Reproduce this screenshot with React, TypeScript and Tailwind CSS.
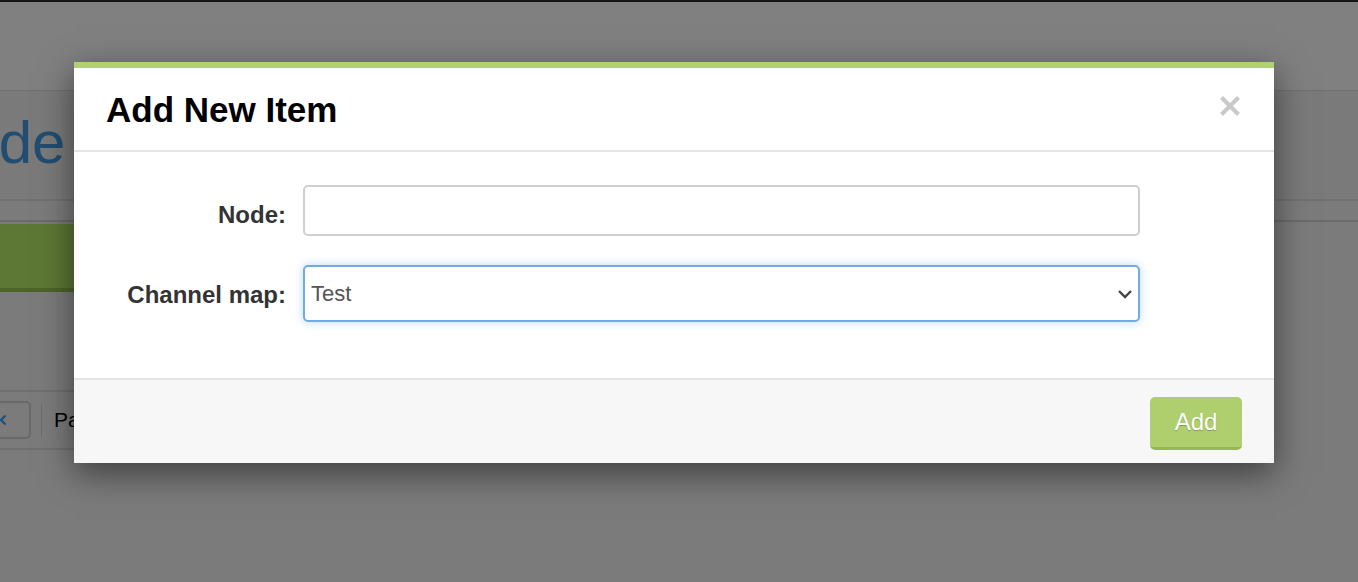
import { useState } from "react";

export default function App() {
  const [node, setNode] = useState("");
  const [channelMap, setChannelMap] = useState("Test");

  return (
    <div className="relative h-[582px] w-full overflow-hidden bg-[#7b7b7b] font-['Liberation_Sans',Arial,sans-serif]">
      {/* page behind the dimmed backdrop */}
      <div className="h-[2px] bg-[#141414]" />
      <div className="h-[89px] border-b border-[#717171] bg-[#808080]" />
      <div className="flex h-[110px] items-center border-b-2 border-[#707070] bg-[#7a7a7a]">
        <h1 className="ml-[-78px] mt-[-4px] text-[60px] leading-none text-[#214d70]">Node</h1>
      </div>
      <div className="h-[21px] border-b-2 border-[#6b6b6b]" />
      <div className="mt-[2px] h-[68px] w-[700px] border-b-[4px] border-[#4d6429] bg-[#5d7735]" />
      <div className="h-[98px]" />
      <div className="flex h-[60px] w-[700px] items-center border-y-2 border-[#707070]">
        <div className="ml-[-20px] flex h-[38px] w-[51px] items-center justify-end rounded-[5px] border-2 border-[#6a6a6a] pr-[24px]">
          <svg width="8" height="12" viewBox="0 0 8 12" className="mr-[-2px]">
            <path d="M6.5 1.5 L2 6 L6.5 10.5" fill="none" stroke="#1d4c78" strokeWidth="2" />
          </svg>
        </div>
        <div className="ml-[10px] h-[33px] w-px bg-[#6c6c6c]" />
        <span className="ml-[12px] text-[21px] text-black">Page</span>
      </div>

      {/* modal */}
      <div className="absolute left-[74px] top-[62px] w-[1200px] border-t-[6px] border-[#b0d16f] bg-white shadow-[0_10px_32px_rgba(0,0,0,0.5)]">
        <div className="flex h-[84px] items-center justify-between border-b-2 border-[#e5e5e5] pl-[32px] pr-[33px]">
          <h2 className="text-[35px] font-bold leading-none text-black">Add New Item</h2>
          <button className="mb-[6px] h-[22px] w-[22px]">
            <svg width="22" height="22" viewBox="0 0 22 22">
              <path d="M2.5 2.5 L19.5 19.5 M19.5 2.5 L2.5 19.5" stroke="#c9c9c9" strokeWidth="4.2" />
            </svg>
          </button>
        </div>

        <div className="flex flex-col gap-[29px] pb-[56px] pt-[33px]">
          <div className="flex items-center">
            <label className="w-[212px] pt-[8px] text-right text-[24px] font-bold text-[#333]">Node:</label>
            <input
              value={node}
              onChange={(e) => setNode(e.target.value)}
              className="ml-[17px] h-[51px] w-[837px] rounded-[5px] border-2 border-[#cfcfcf] px-[8px] text-[22px] text-[#555] outline-none"
            />
          </div>
          <div className="flex items-center">
            <label className="w-[212px] pt-[3px] text-right text-[24px] font-bold text-[#333]">Channel map:</label>
            <div className="relative ml-[17px] w-[837px]">
              <select
                value={channelMap}
                onChange={(e) => setChannelMap(e.target.value)}
                className="h-[57px] w-full appearance-none rounded-[5px] border-2 border-[#73a9e6] bg-white pl-[6px] text-[22px] text-[#555] shadow-[0_0_10px_rgba(102,175,233,0.45)] outline-none"
              >
                <option>Test</option>
              </select>
              <svg width="16" height="10" viewBox="0 0 16 10" className="pointer-events-none absolute right-[7px] top-[24px]">
                <path d="M2 2 L8 8 L14 2" fill="none" stroke="#444" strokeWidth="2.4" />
              </svg>
            </div>
          </div>
        </div>

        <div className="flex h-[85px] justify-end border-t-2 border-[#e5e5e5] bg-[#f7f7f7] pr-[32px] pt-[17px]">
          <button className="h-[53px] w-[92px] rounded-[5px] border-b-[3px] border-[#97b955] bg-[#afcf6f] text-[24px] text-white [text-shadow:0_1px_1px_rgba(70,100,30,0.45)]">
            Add
          </button>
        </div>
      </div>
    </div>
  );
}
